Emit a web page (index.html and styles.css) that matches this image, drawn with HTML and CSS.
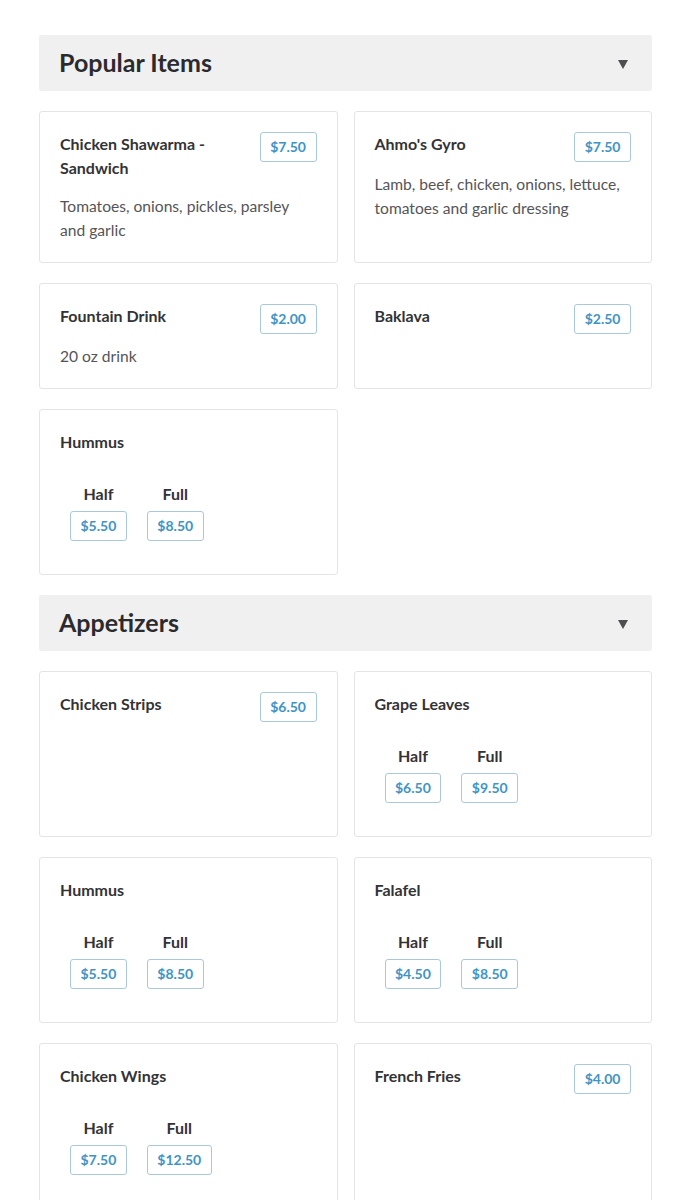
FILE: index.html
```html
<!DOCTYPE html>
<html lang="en">
<head>
<meta charset="utf-8">
<title>Menu</title>
<link rel="stylesheet" href="styles.css">
</head>
<body>
<main class="menu">
  <section class="category">
    <div class="category-head">
      <h2 class="category-title">Popular Items</h2>
      <span class="caret"></span>
    </div>
    <div class="grid">
      <div class="card">
        <div class="card-top">
          <h3 class="item-name">Chicken Shawarma - Sandwich</h3>
          <span class="price">$7.50</span>
        </div>
        <p class="desc">Tomatoes, onions, pickles, parsley and garlic</p>
      </div>
      <div class="card">
        <div class="card-top">
          <h3 class="item-name">Ahmo's Gyro</h3>
          <span class="price">$7.50</span>
        </div>
        <p class="desc">Lamb, beef, chicken, onions, lettuce, tomatoes and garlic dressing</p>
      </div>
      <div class="card">
        <div class="card-top">
          <h3 class="item-name">Fountain Drink</h3>
          <span class="price">$2.00</span>
        </div>
        <p class="desc">20 oz drink</p>
      </div>
      <div class="card">
        <div class="card-top">
          <h3 class="item-name">Baklava</h3>
          <span class="price">$2.50</span>
        </div>
      </div>
      <div class="card">
        <div class="card-top">
          <h3 class="item-name">Hummus</h3>
        </div>
        <div class="options">
          <div class="option"><span class="opt-label">Half</span><span class="price">$5.50</span></div>
          <div class="option"><span class="opt-label">Full</span><span class="price">$8.50</span></div>
        </div>
      </div>
    </div>
  </section>

  <section class="category">
    <div class="category-head">
      <h2 class="category-title">Appetizers</h2>
      <span class="caret"></span>
    </div>
    <div class="grid">
      <div class="card">
        <div class="card-top">
          <h3 class="item-name">Chicken Strips</h3>
          <span class="price">$6.50</span>
        </div>
      </div>
      <div class="card">
        <div class="card-top">
          <h3 class="item-name">Grape Leaves</h3>
        </div>
        <div class="options">
          <div class="option"><span class="opt-label">Half</span><span class="price">$6.50</span></div>
          <div class="option"><span class="opt-label">Full</span><span class="price">$9.50</span></div>
        </div>
      </div>
      <div class="card">
        <div class="card-top">
          <h3 class="item-name">Hummus</h3>
        </div>
        <div class="options">
          <div class="option"><span class="opt-label">Half</span><span class="price">$5.50</span></div>
          <div class="option"><span class="opt-label">Full</span><span class="price">$8.50</span></div>
        </div>
      </div>
      <div class="card">
        <div class="card-top">
          <h3 class="item-name">Falafel</h3>
        </div>
        <div class="options">
          <div class="option"><span class="opt-label">Half</span><span class="price">$4.50</span></div>
          <div class="option"><span class="opt-label">Full</span><span class="price">$8.50</span></div>
        </div>
      </div>
      <div class="card">
        <div class="card-top">
          <h3 class="item-name">Chicken Wings</h3>
        </div>
        <div class="options">
          <div class="option"><span class="opt-label">Half</span><span class="price">$7.50</span></div>
          <div class="option"><span class="opt-label">Full</span><span class="price">$12.50</span></div>
        </div>
      </div>
      <div class="card">
        <div class="card-top">
          <h3 class="item-name">French Fries</h3>
          <span class="price">$4.00</span>
        </div>
      </div>
    </div>
  </section>
</main>
</body>
</html>
```

FILE: styles.css
```css
* { box-sizing: border-box; }

body {
  margin: 0;
  background: #ffffff;
  font-family: Lato, "Open Sans", "Liberation Sans", sans-serif;
  color: #333;
}

.menu {
  padding: 35px 38px 0 39px;
}

.category-head {
  height: 56px;
  background: #f0f0f1;
  border-radius: 3px;
  padding: 0 24px 0 20px;
  display: flex;
  align-items: center;
  justify-content: space-between;
}

.category-title {
  margin: 0;
  font-size: 25px;
  font-weight: 700;
  color: #2b2b2e;
  line-height: 30px;
  margin-top: -2px;
}

.caret {
  width: 0;
  height: 0;
  border-left: 5px solid transparent;
  border-right: 5px solid transparent;
  border-top: 9px solid #4d4d52;
  margin-top: 2px;
}

.grid {
  display: grid;
  grid-template-columns: 1fr 1fr;
  column-gap: 16px;
  row-gap: 20px;
  margin: 20px 0;
}

.card {
  border: 1px solid #e4e4e6;
  border-radius: 3px;
  padding: 20px;
}

.card-top {
  display: flex;
  justify-content: space-between;
  align-items: flex-start;
  gap: 16px;
}

.item-name {
  margin: 0 0 14px;
  font-size: 16px;
  font-weight: 700;
  line-height: 24px;
  color: #333336;
}

.price {
  flex: none;
  display: inline-block;
  border: 1px solid #a9c8d9;
  border-radius: 3px;
  padding: 0 9.5px;
  line-height: 28px;
  font-size: 14px;
  font-weight: 700;
  color: #3f94c6;
  background: #fff;
}

.card-top .price {
  margin-bottom: 10px;
}

.desc {
  margin: 0;
  font-size: 15.6px;
  line-height: 24px;
  color: #555558;
}

.options {
  display: flex;
  gap: 20px;
  padding-left: 10px;
  margin: 14px 0 13px;
}

.option {
  display: flex;
  flex-direction: column;
  align-items: center;
  gap: 5px;
}

.opt-label {
  font-size: 16px;
  font-weight: 700;
  line-height: 24px;
  color: #333336;
}
```
